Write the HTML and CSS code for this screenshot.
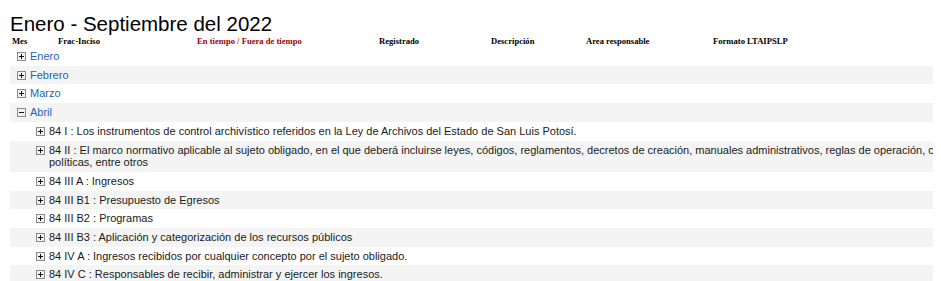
FILE: index.html
```html
<!DOCTYPE html>
<html lang="es">
<head>
<meta charset="utf-8">
<title>Enero - Septiembre del 2022</title>
<link rel="stylesheet" href="styles.css">
</head>
<body>
<h1 class="title">Enero - Septiembre del 2022</h1>
<div class="head">
  <span class="hc c-mes">Mes</span>
  <span class="hc c-frac">Frac-Inciso</span>
  <span class="hc c-tiempo">En tiempo / Fuera de tiempo</span>
  <span class="hc c-reg">Registrado</span>
  <span class="hc c-desc">Descripción</span>
  <span class="hc c-area">Area responsable</span>
  <span class="hc c-fmt">Formato LTAIPSLP</span>
</div>
<ul class="tree">
  <li class="row month"><svg class="tg" viewBox="0 0 9 9"><rect x="0.5" y="0.5" width="8" height="8" fill="#f3f3f3" stroke="#8a8a8a"/><path d="M2 4.5h5M4.5 2v5" stroke="#111" stroke-width="1"/></svg><a class="mlink">Enero</a></li>
  <li class="row month alt"><svg class="tg" viewBox="0 0 9 9"><rect x="0.5" y="0.5" width="8" height="8" fill="#f3f3f3" stroke="#8a8a8a"/><path d="M2 4.5h5M4.5 2v5" stroke="#111" stroke-width="1"/></svg><a class="mlink">Febrero</a></li>
  <li class="row month"><svg class="tg" viewBox="0 0 9 9"><rect x="0.5" y="0.5" width="8" height="8" fill="#f3f3f3" stroke="#8a8a8a"/><path d="M2 4.5h5M4.5 2v5" stroke="#111" stroke-width="1"/></svg><a class="mlink">Marzo</a></li>
  <li class="row month alt"><svg class="tg" viewBox="0 0 9 9"><rect x="0.5" y="0.5" width="8" height="8" fill="#f3f3f3" stroke="#8a8a8a"/><path d="M2 4.5h5" stroke="#111" stroke-width="1"/></svg><a class="mlink">Abril</a></li>
  <li class="row item"><svg class="tg" viewBox="0 0 9 9"><rect x="0.5" y="0.5" width="8" height="8" fill="#f3f3f3" stroke="#8a8a8a"/><path d="M2 4.5h5M4.5 2v5" stroke="#111" stroke-width="1"/></svg><span class="txt">84 I : Los instrumentos de control archivístico referidos en la Ley de Archivos del Estado de San Luis Potosí.</span></li>
  <li class="row item alt"><svg class="tg" viewBox="0 0 9 9"><rect x="0.5" y="0.5" width="8" height="8" fill="#f3f3f3" stroke="#8a8a8a"/><path d="M2 4.5h5M4.5 2v5" stroke="#111" stroke-width="1"/></svg><span class="txt">84 II : El marco normativo aplicable al sujeto obligado, en el que deberá incluirse leyes, códigos, reglamentos, decretos de creación, manuales administrativos, reglas de operación, criterios, políticas, entre otros</span></li>
  <li class="row item"><svg class="tg" viewBox="0 0 9 9"><rect x="0.5" y="0.5" width="8" height="8" fill="#f3f3f3" stroke="#8a8a8a"/><path d="M2 4.5h5M4.5 2v5" stroke="#111" stroke-width="1"/></svg><span class="txt">84 III A : Ingresos</span></li>
  <li class="row item alt"><svg class="tg" viewBox="0 0 9 9"><rect x="0.5" y="0.5" width="8" height="8" fill="#f3f3f3" stroke="#8a8a8a"/><path d="M2 4.5h5M4.5 2v5" stroke="#111" stroke-width="1"/></svg><span class="txt">84 III B1 : Presupuesto de Egresos</span></li>
  <li class="row item"><svg class="tg" viewBox="0 0 9 9"><rect x="0.5" y="0.5" width="8" height="8" fill="#f3f3f3" stroke="#8a8a8a"/><path d="M2 4.5h5M4.5 2v5" stroke="#111" stroke-width="1"/></svg><span class="txt">84 III B2 : Programas</span></li>
  <li class="row item alt"><svg class="tg" viewBox="0 0 9 9"><rect x="0.5" y="0.5" width="8" height="8" fill="#f3f3f3" stroke="#8a8a8a"/><path d="M2 4.5h5M4.5 2v5" stroke="#111" stroke-width="1"/></svg><span class="txt">84 III B3 : Aplicación y categorización de los recursos públicos</span></li>
  <li class="row item"><svg class="tg" viewBox="0 0 9 9"><rect x="0.5" y="0.5" width="8" height="8" fill="#f3f3f3" stroke="#8a8a8a"/><path d="M2 4.5h5M4.5 2v5" stroke="#111" stroke-width="1"/></svg><span class="txt">84 IV A : Ingresos recibidos por cualquier concepto por el sujeto obligado.</span></li>
  <li class="row item alt"><svg class="tg" viewBox="0 0 9 9"><rect x="0.5" y="0.5" width="8" height="8" fill="#f3f3f3" stroke="#8a8a8a"/><path d="M2 4.5h5M4.5 2v5" stroke="#111" stroke-width="1"/></svg><span class="txt">84 IV C : Responsables de recibir, administrar y ejercer los ingresos.</span></li>
</ul>
</body>
</html>
```

FILE: styles.css
```css
html { overflow: hidden; }
body {
  margin: 8px;
  background: #fff;
  font-family: "Liberation Sans", Arial, sans-serif;
  color: #1a1a1a;
}
.title {
  margin: 0;
  padding: 4px 0 0 2px;
  font-size: 20.5px;
  font-weight: normal;
  line-height: 23px;
  color: #000;
}
.head {
  display: flex;
  padding-left: 4px;
  height: 12px;
  font-family: "Liberation Serif", "Times New Roman", serif;
  font-weight: bold;
  font-size: 8.6px;
  line-height: 12px;
  color: #000;
}
.hc { display: block; white-space: nowrap; }
.c-mes { width: 46px; }
.c-frac { width: 139px; }
.c-tiempo { width: 182px; color: #a30000; }
.c-reg { width: 112px; }
.c-desc { width: 95px; }
.c-area { width: 127px; }
.c-fmt { width: 120px; }
.tree {
  list-style: none;
  margin: 0 0 0 2px;
  padding: 0;
  width: 1000px;
  font-size: 11px;
}
.row {
  display: flex;
  align-items: flex-start;
  padding: 3px 0;
  line-height: 12.7px;
}
.row.alt { background: #f4f4f4; }
.month { padding-left: 7px; }
.item { padding-left: 26px; }
.tg {
  flex: none;
  width: 9px;
  height: 9px;
  margin: 2px 4px 0 0;
}
.mlink { color: #2263b3; text-decoration: none; }
.txt { color: #1a1a1a; }
```
